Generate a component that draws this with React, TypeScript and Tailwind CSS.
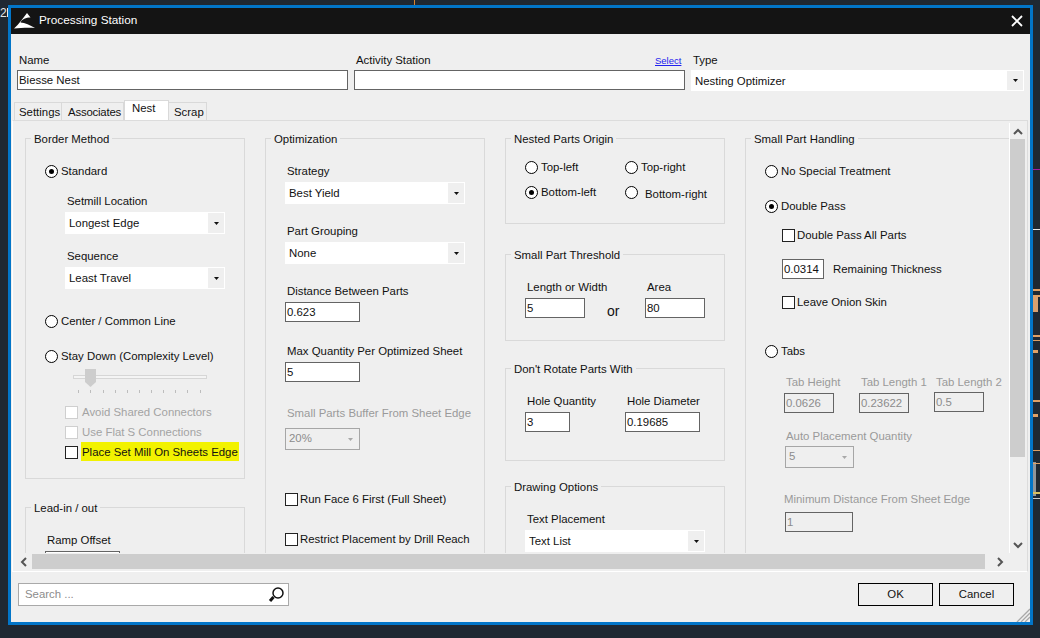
import React from 'react';

const Label = ({ className = '', muted, children }: { className?: string; muted?: boolean; children: React.ReactNode }) => (
  <div className={`h-[14px] leading-[14px] whitespace-nowrap ${muted ? 'text-[#9a9a9a]' : ''} ${className}`}>{children}</div>
);

const Radio = ({ checked, label, className = '', labelClass = 'ml-[3px]' }: { checked?: boolean; label: string; className?: string; labelClass?: string }) => (
  <div className={`flex items-center h-[14px] whitespace-nowrap ${className}`}>
    <span className="w-[13px] h-[13px] rounded-full border border-black bg-white flex items-center justify-center shrink-0">
      {checked && <span className="w-[5px] h-[5px] rounded-full bg-black" />}
    </span>
    <span className={`pt-[2px] ${labelClass}`}>{label}</span>
  </div>
);

const Check = ({ label, muted, className = '', labelClass = 'ml-[2px]' }: { label: string; muted?: boolean; className?: string; labelClass?: string }) => (
  <div className={`flex items-center h-[14px] whitespace-nowrap ${className}`}>
    <span className={`w-[13px] h-[13px] bg-white shrink-0 border ${muted ? 'border-[#cfcfcf]' : 'border-[#222]'}`} />
    <span className={`pt-[2px] ${labelClass} ${muted ? 'text-[#a3a3a3]' : ''}`}>{label}</span>
  </div>
);

const Field = ({ value = '', muted, className = '' }: { value?: string; muted?: boolean; className?: string }) => (
  <div className={`h-[20px] leading-[18px] pl-[1px] border border-[#646464] whitespace-nowrap ${muted ? 'bg-[#efefef] text-[#8c8c8c]' : 'bg-white'} ${className}`}>
    {value}
  </div>
);

const Caret = ({ muted }: { muted?: boolean }) => (
  <svg width="5" height="3" viewBox="0 0 5 3">
    <path d="M0 0h5L2.500 3z" fill={muted ? '#a8a8a8' : '#111'} />
  </svg>
);

const Select = ({ value, className = '' }: { value: string; className?: string }) => (
  <div className={`h-[22px] bg-white flex items-center pl-[4px] pr-[1px] ${className}`}>
    <span className="flex-1 pt-[2px] whitespace-nowrap">{value}</span>
    <span className="w-[16px] h-[20px] bg-[#efefef] flex items-center justify-center">
      <Caret />
    </span>
  </div>
);

const MutedSelect = ({ value, className = '' }: { value: string; className?: string }) => (
  <div className={`h-[22px] border border-[#a6a6a6] flex items-center pl-[3px] pr-[6px] text-[#8c8c8c] ${className}`}>
    <span className="flex-1">{value}</span>
    <Caret muted />
  </div>
);

const Group = ({ title, className = '', children }: { title: string; className?: string; children?: React.ReactNode }) => (
  <div className={`relative border border-[#d9d9d9] ${className}`}>
    <span className="absolute left-[5px] top-[-8px] px-[3px] h-[14px] leading-[16px] bg-[#efefef] whitespace-nowrap">{title}</span>
    {children}
  </div>
);

const ScrollChevron = ({ d }: { d: string }) => (
  <svg width="10" height="10" viewBox="0 0 10 10">
    <path d={d} fill="none" stroke="#555" strokeWidth="2" />
  </svg>
);

const StayDownSlider = () => (
  <svg width="140" height="24" viewBox="0 0 140 24" className="ml-[46px] block">
    <rect x="1.5" y="6.5" width="133" height="3" fill="#f4f4f4" stroke="#d6d6d6" />
    <path d="M13 0h11v13l-5.500 5L13 13z" fill="#cdcdcd" />
    {[6, 18, 31, 43, 55, 67, 79, 91, 103, 115, 128].map((x) => (
      <rect key={x} x={x} y="21" width="1" height="3" fill="#bdbdbd" />
    ))}
  </svg>
);

const BackgroundDrawing = () => (
  <svg width="1040" height="638" className="absolute inset-0">
    <rect x="414" y="0" width="1" height="5" fill="#d9822b" />
    <rect x="7" y="8" width="1" height="9" fill="#e5e5e5" />
    <rect x="1033" y="169" width="7" height="1" fill="#a01fa0" />
    <rect x="1033" y="229" width="7" height="1" fill="#e8e8e8" />
    <rect x="1033" y="289" width="7" height="2" fill="#e0a066" />
    <rect x="1033" y="295" width="7" height="2" fill="#e0a066" />
    <rect x="1033" y="297" width="5" height="15" fill="#d9a070" />
    <rect x="1033" y="335" width="7" height="2" fill="#e0a066" />
    <rect x="1033" y="340" width="7" height="1" fill="#e0a066" />
    <rect x="1033" y="350" width="5" height="3" fill="#e0a066" />
    <rect x="1033" y="400" width="7" height="2" fill="#e0a066" />
    <rect x="1033" y="414" width="5" height="3" fill="#e0a066" />
    <rect x="1033" y="450" width="7" height="1" fill="#e0a066" />
    <rect x="1033" y="462" width="3" height="34" fill="#8f959b" />
    <rect x="1033" y="463" width="7" height="1" fill="#e0a066" />
    <rect x="1033" y="492" width="7" height="2" fill="#d9c060" />
    <rect x="1033" y="498" width="7" height="1" fill="#c8c8c8" />
  </svg>
);

export default function App() {
  return (
    <div className="relative w-[1040px] h-[638px] overflow-hidden bg-[#1f2832] pl-[8px] pt-[5px] text-[11.4px] text-[#111] font-['Liberation_Sans',Arial,sans-serif]">
      <BackgroundDrawing />
      <span className="absolute left-0 top-[6px] text-[12px] text-[#e5e5e5] leading-[14px]">2</span>

      <div className="relative w-[1025px] h-[620px] border-[3px] border-[#0275c8] bg-[#efefef] flex flex-col">
        {/* Title bar */}
        <div className="h-[26px] shrink-0 bg-[#141414] flex items-center text-white text-[11.8px] pl-[3px] pr-[6px]">
          <svg width="22" height="18" viewBox="0 0 22 18" className="mr-[3px]">
            <path d="M13 1 L16.500 5.500 C12 5.500 8 7 6.500 10.500 C11 10.500 16 13 21 16 C14 15.500 6 16 0 16.500 C5 12 9 6 13 1z" fill="#fff" />
          </svg>
          <span className="flex-1">Processing Station</span>
          <svg width="12" height="12" viewBox="0 0 12 12" className="mr-[1px]">
            <path d="M1 1l10 10M11 1L1 11" stroke="#fff" strokeWidth="1.800" />
          </svg>
        </div>

        {/* Name / station / type */}
        <div className="h-[36px] shrink-0 flex items-end pb-[3px] pl-[8px]">
          <Label className="w-[337px]">Name</Label>
          <Label className="w-[299px]">Activity Station</Label>
          <span className="w-[38px] h-[14px] leading-[16px] text-[9.5px] text-[#2222ee] underline">Select</span>
          <Label>Type</Label>
        </div>
        <div className="h-[21px] shrink-0 flex pl-[6px]">
          <Field value="Biesse Nest" className="w-[331px] leading-[16px]" />
          <Field className="w-[331px] ml-[6px]" />
          <div className="w-[333px] h-[21px] ml-[6px] bg-white flex items-center pl-[4px] pr-[1px]">
            <span className="flex-1 pt-[2px]">Nesting Optimizer</span>
            <span className="w-[16px] h-[19px] bg-[#efefef] flex items-center justify-center">
              <Caret />
            </span>
          </div>
        </div>

        {/* Tabs */}
        <div className="h-[19px] mt-[10px] shrink-0 flex items-end pl-[3px] relative z-10">
          <span className="h-[18px] w-[48px] pl-[4px] leading-[18px] bg-[#efefef] border border-b-0 border-[#d9d9d9]">Settings</span>
          <span className="h-[18px] w-[62px] pl-[6px] leading-[18px] bg-[#efefef] border border-b-0 border-l-0 border-[#d9d9d9] tracking-[-0.2px]">Associates</span>
          <span className="h-[20px] w-[45px] pl-[7px] leading-[15px] bg-white border border-b-0 border-[#d9d9d9]">Nest</span>
          <span className="h-[18px] w-[38px] pl-[5px] leading-[18px] bg-[#efefef] border border-b-0 border-l-0 border-[#d9d9d9]">Scrap</span>
        </div>

        {/* Tab panel */}
        <div className="ml-[1px] w-[1016px] h-[452px] shrink-0 border border-[#dcdcdc] border-b-white border-l-white flex flex-col pl-[2px] pt-[2px]">
          <div className="h-[430px] shrink-0 flex">
            <div className="w-[995px] h-[430px] overflow-hidden border-r border-white flex pt-[15px] pl-[10px]">
              {/* Column 1 */}
              <div className="w-[240px] shrink-0">
                <Group title="Border Method" className="w-[220px] h-[341px] pl-[19px] pt-[25px]">
                  <Radio checked label="Standard" />
                  <Label className="mt-[16px] ml-[22px]">Setmill Location</Label>
                  <Select value="Longest Edge" className="w-[160px] mt-[4px] ml-[20px]" />
                  <Label className="mt-[15px] ml-[22px]">Sequence</Label>
                  <Select value="Least Travel" className="w-[160px] mt-[4px] ml-[20px]" />
                  <Radio label="Center / Common Line" className="mt-[25px]" />
                  <Radio label="Stay Down (Complexity Level)" className="mt-[21px]" />
                  <div className="mt-[6px] ml-[-19px]">
                    <StayDownSlider />
                  </div>
                  <Check muted label="Avoid Shared Connectors" labelClass="ml-[4px]" className="mt-[12px] ml-[20px]" />
                  <Check muted label="Use Flat S Connections" labelClass="ml-[4px]" className="mt-[6px] ml-[20px]" />
                  <div className="relative mt-[6px] ml-[20px]">
                    <span className="absolute left-[16px] top-[-3px] w-[158px] h-[19px] bg-[#f2f200]" />
                    <div className="relative">
                      <Check label="Place Set Mill On Sheets Edge" labelClass="ml-[4px]" />
                    </div>
                  </div>
                </Group>
                <Group title="Lead-in / out" className="w-[220px] h-[120px] mt-[28px] pl-[19px] pt-[25px]">
                  <Label className="ml-[2px]">Ramp Offset</Label>
                  <Field className="w-[75px] mt-[4px]" />
                </Group>
              </div>

              {/* Column 2 */}
              <div className="w-[240px] shrink-0">
                <Group title="Optimization" className="w-[220px] h-[500px] pl-[19px] pt-[25px]">
                  <Label className="ml-[2px]">Strategy</Label>
                  <Select value="Best Yield" className="w-[180px] mt-[4px]" />
                  <Label className="mt-[20px] ml-[2px]">Part Grouping</Label>
                  <Select value="None" className="w-[180px] mt-[4px]" />
                  <Label className="mt-[20px] ml-[2px]">Distance Between Parts</Label>
                  <Field value="0.623" className="w-[75px] mt-[4px]" />
                  <Label className="mt-[22px] ml-[2px]">Max Quantity Per Optimized Sheet</Label>
                  <Field value="5" className="w-[75px] mt-[4px]" />
                  <Label muted className="mt-[24px] ml-[2px]">Small Parts Buffer From Sheet Edge</Label>
                  <MutedSelect value="20%" className="w-[75px] mt-[8px]" />
                  <Check label="Run Face 6 First (Full Sheet)" className="mt-[42px]" />
                  <Check label="Restrict Placement by Drill Reach" className="mt-[26px]" />
                </Group>
              </div>

              {/* Column 3 */}
              <div className="w-[240px] shrink-0">
                <Group title="Nested Parts Origin" className="w-[220px] h-[86px] pl-[19px] pt-[21px]">
                  <div className="flex">
                    <Radio label="Top-left" className="w-[100px]" />
                    <Radio label="Top-right" />
                  </div>
                  <div className="flex mt-[11px]">
                    <Radio checked label="Bottom-left" className="w-[100px]" />
                    <Radio label="Bottom-right" labelClass="ml-[7px] mt-[4px]" />
                  </div>
                </Group>
                <Group title="Small Part Threshold" className="w-[220px] h-[87px] mt-[30px] pl-[19px] pt-[25px]">
                  <div className="flex">
                    <div className="w-[120px]">
                      <Label className="ml-[2px]">Length or Width</Label>
                      <Field value="5" className="w-[60px] mt-[4px]" />
                    </div>
                    <div>
                      <Label className="ml-[2px]">Area</Label>
                      <Field value="80" className="w-[60px] mt-[4px]" />
                    </div>
                  </div>
                  <span className="absolute left-[101px] top-[48px] text-[14px] leading-[16px]">or</span>
                </Group>
                <Group title="Don't Rotate Parts With" className="w-[220px] h-[93px] mt-[27px] pl-[19px] pt-[25px]">
                  <div className="flex">
                    <div className="w-[100px]">
                      <Label className="ml-[2px]">Hole Quantity</Label>
                      <Field value="3" className="w-[45px] mt-[4px]" />
                    </div>
                    <div>
                      <Label className="ml-[2px]">Hole Diameter</Label>
                      <Field value="0.19685" className="w-[75px] mt-[4px]" />
                    </div>
                  </div>
                </Group>
                <Group title="Drawing Options" className="w-[220px] h-[120px] mt-[25px] pl-[19px] pt-[25px]">
                  <Label className="ml-[2px]">Text Placement</Label>
                  <Select value="Text List" className="w-[180px] mt-[4px]" />
                </Group>
              </div>

              {/* Column 4 */}
              <div className="w-[300px] shrink-0">
                <Group title="Small Part Handling" className="w-[300px] h-[500px] pl-[19px] pt-[25px]">
                  <Radio label="No Special Treatment" />
                  <Radio checked label="Double Pass" className="mt-[21px]" />
                  <Check label="Double Pass All Parts" className="mt-[15px] ml-[17px]" />
                  <div className="flex items-center mt-[17px] ml-[17px]">
                    <Field value="0.0314" className="w-[42px]" />
                    <span className="ml-[9px] pt-[2px]">Remaining Thickness</span>
                  </div>
                  <Check label="Leave Onion Skin" className="mt-[16px] ml-[17px]" />
                  <Radio label="Tabs" className="mt-[35px]" />
                  <div className="flex mt-[17px] ml-[19px]">
                    <div className="w-[75px]">
                      <Label muted className="ml-[2px]">Tab Height</Label>
                      <Field muted value="0.0626" className="w-[50px] mt-[4px]" />
                    </div>
                    <div className="w-[75px]">
                      <Label muted className="ml-[2px]">Tab Length 1</Label>
                      <Field muted value="0.23622" className="w-[50px] mt-[4px]" />
                    </div>
                    <div className="w-[75px]">
                      <Label muted className="ml-[2px]">Tab Length 2</Label>
                      <Field muted value="0.5" className="w-[50px] mt-[3px]" />
                    </div>
                  </div>
                  <Label muted className="mt-[16px] ml-[21px]">Auto Placement Quantity</Label>
                  <MutedSelect value="5" className="w-[69px] mt-[3px] ml-[20px]" />
                  <Label muted className="mt-[24px] ml-[19px]">Minimum Distance From Sheet Edge</Label>
                  <Field muted value="1" className="w-[68px] mt-[6px] ml-[20px]" />
                </Group>
              </div>
            </div>

            {/* Vertical scrollbar */}
            <div className="w-[15px] shrink-0 flex flex-col items-center">
              <div className="h-[16px] pt-[4px]">
                <ScrollChevron d="M1 7l4-4 4 4" />
              </div>
              <div className="w-[15px] h-[318px] bg-[#cdcdcd]" />
              <div className="flex-1 flex items-end pb-[3px]">
                <ScrollChevron d="M1 3l4 4 4-4" />
              </div>
            </div>
          </div>

          {/* Horizontal scrollbar */}
          <div className="h-[15px] mt-[1px] flex items-center">
            <div className="w-[17px] flex justify-center">
              <ScrollChevron d="M7 1L3 5l4 4" />
            </div>
            <div className="w-[953px] h-[15px] bg-[#cdcdcd]" />
            <div className="w-[30px] flex justify-center">
              <ScrollChevron d="M3 1l4 4-4 4" />
            </div>
          </div>
        </div>

        {/* Footer */}
        <div className="mt-[11px] h-[23px] flex pl-[7px]">
          <div className="w-[271px] h-[23px] border border-[#a9a9a9] bg-white flex items-center pl-[6px] pr-[3px]">
            <span className="flex-1 text-[#8c8c8c]">Search ...</span>
            <svg width="17" height="18" viewBox="0 0 17 18">
              <circle cx="10" cy="7" r="5" fill="none" stroke="#111" strokeWidth="1.500" />
              <path d="M5.500 11L2 15" stroke="#111" strokeWidth="3" />
            </svg>
          </div>
          <button className="w-[75px] h-[23px] ml-[569px] border border-black bg-[#efefef]">OK</button>
          <button className="w-[75px] h-[23px] ml-[6px] border border-black bg-[#efefef]">Cancel</button>
        </div>

        {/* Resize grip */}
        <svg width="14" height="14" viewBox="0 0 14 14" className="absolute right-0 bottom-0">
          <path d="M14 1L1 14M14 5L5 14M14 9L9 14" stroke="#a8a8a8" strokeWidth="1.300" />
        </svg>
      </div>
    </div>
  );
}
